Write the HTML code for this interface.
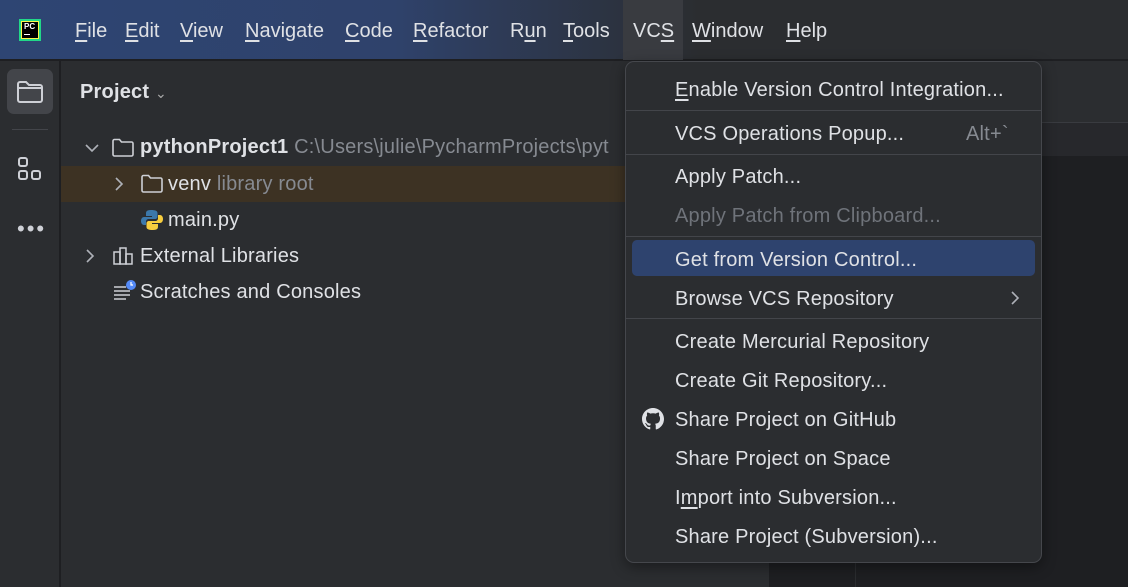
<!DOCTYPE html>
<html><head><meta charset="utf-8"><style>
*{margin:0;padding:0;box-sizing:border-box}
body{width:1128px;height:587px;overflow:hidden;background:#1e1f22;font-family:"Liberation Sans",sans-serif;color:#dfe1e5;position:relative}
.top{position:absolute;left:0;top:0;width:1128px;height:60px;background:linear-gradient(90deg,#2e4573 0%,#2f426b 35%,#2b2d30 62%,#2b2d30 100%);border-bottom:1px solid #1e1f22}
.mi{position:absolute;top:20px;font-size:20px;color:#dfe1e5}
.u{text-decoration:underline;text-underline-offset:3px}
.left{position:absolute;left:0;top:61px;width:60px;height:526px;background:#2b2d30;border-right:1px solid #1e1f22}
.proj{position:absolute;left:61px;top:61px;width:709px;height:526px;background:#2b2d30;border-right:1px solid #1e1f22}
.t{position:absolute;font-size:20px;white-space:nowrap;letter-spacing:0.2px}
.menu{position:absolute;left:625px;top:61px;width:417px;height:502px;background:#2b2d30;border:1px solid #45474c;border-radius:9px;box-shadow:0 4px 14px rgba(0,0,0,.4)}
.menu .t{left:49px}
.sep{position:absolute;left:0;width:415px;height:1px;background:#43454a}
.hl{position:absolute;left:6px;top:178px;width:403px;height:36px;background:#2e436e;border-radius:5px}
</style></head><body>
<div class="top">
 <div style="position:absolute;left:19px;top:19px;width:22px;height:22px;background:#21d789;padding:2px"><div style="width:18px;height:18px;background:#000;border:1px solid #fcf84a;color:#fff;font-size:8px;font-weight:bold;line-height:9px;padding-left:2px">PC<div style="width:6px;height:1px;background:#fff;margin-top:3px"></div></div></div>
 <div style="position:absolute;left:623px;top:0;width:60px;height:60px;background:#393b40"></div>
 <span class="mi" style="left:75px"><span class="u">F</span>ile</span>
 <span class="mi" style="left:125px"><span class="u">E</span>dit</span>
 <span class="mi" style="left:180px"><span class="u">V</span>iew</span>
 <span class="mi" style="left:245px"><span class="u">N</span>avigate</span>
 <span class="mi" style="left:345px"><span class="u">C</span>ode</span>
 <span class="mi" style="left:413px"><span class="u">R</span>efactor</span>
 <span class="mi" style="left:510px">R<span class="u">u</span>n</span>
 <span class="mi" style="left:563px"><span class="u">T</span>ools</span>
 <span class="mi" style="left:633px">VC<span class="u">S</span></span>
 <span class="mi" style="left:692px"><span class="u">W</span>indow</span>
 <span class="mi" style="left:786px"><span class="u">H</span>elp</span>
</div>
<div class="left">
 <div style="position:absolute;left:7px;top:8px;width:46px;height:45px;background:#43454a;border-radius:7px"></div>
 <svg style="position:absolute;left:16px;top:19px" width="28" height="24" viewBox="0 0 28 24"><path d="M2 4a2 2 0 0 1 2-2h6l3 3h11a2 2 0 0 1 2 2v13a2 2 0 0 1-2 2H4a2 2 0 0 1-2-2z M2 8h24" fill="none" stroke="#ced0d6" stroke-width="2"/></svg>
 <div style="position:absolute;left:12px;top:68px;width:36px;height:1px;background:#43454a"></div>
 <svg style="position:absolute;left:17px;top:95px" width="26" height="26" viewBox="0 0 26 26" fill="none" stroke="#ced0d6" stroke-width="2"><rect x="2" y="2" width="8" height="8" rx="2"/><rect x="2" y="15" width="8" height="8" rx="2"/><rect x="15" y="15" width="8" height="8" rx="2"/></svg>
 <div style="position:absolute;left:17px;top:164px;font-size:22px;letter-spacing:2px;color:#ced0d6;line-height:8px">•••</div>
</div>
<div class="proj">
 <span class="t" style="left:19px;top:20px;font-weight:bold;font-size:20px">Project <span style="font-weight:normal;font-size:14px;color:#aaa">&#8964;</span></span>
 <svg style="position:absolute;left:24px;top:82px" width="14" height="10"><path d="M1 2l6 6 6-6" fill="none" stroke="#aeb1b8" stroke-width="1.6"/></svg>
 <svg style="position:absolute;left:51px;top:77px" width="22" height="20"><path d="M1 3a1.5 1.5 0 0 1 1.5-1.5h5l2 2.5h10a1.5 1.5 0 0 1 1.5 1.5v11a1.5 1.5 0 0 1-1.5 1.5h-17A1.5 1.5 0 0 1 1 16.5z" fill="none" stroke="#ced0d6" stroke-width="1.6"/></svg>
 <span class="t" style="left:79px;top:75px;font-weight:bold">pythonProject1 <span style="font-weight:normal;color:#868a91">C:\Users\julie\PycharmProjects\pyt</span></span>
 <div style="position:absolute;left:0;top:105px;width:709px;height:36px;background:#3d3223"></div>
 <svg style="position:absolute;left:53px;top:116px" width="10" height="14"><path d="M2 1l6 6-6 6" fill="none" stroke="#aeb1b8" stroke-width="1.6"/></svg>
 <svg style="position:absolute;left:80px;top:113px" width="22" height="20"><path d="M1 3a1.5 1.5 0 0 1 1.5-1.5h5l2 2.5h10a1.5 1.5 0 0 1 1.5 1.5v11a1.5 1.5 0 0 1-1.5 1.5h-17A1.5 1.5 0 0 1 1 16.5z" fill="none" stroke="#ced0d6" stroke-width="1.6"/></svg>
 <span class="t" style="left:107px;top:112px">venv <span style="color:#868a91">library root</span></span>
 <svg style="position:absolute;left:80px;top:148px" width="22" height="22" viewBox="0 0 22 22"><path d="M10 1c-5 0-5 2-5 4v2h6v1H3c-2 0-3 2-3 4s1 4 3 4h2v-3c0-2 1-3 3-3h6c1.5 0 2.5-1 2.5-2.5V4c0-2-2-3-6.5-3z" fill="#3c78aa"/><path d="M12 21c5 0 5-2 5-4v-2h-6v-1h8c2 0 3-2 3-4s-1-4-3-4h-2v3c0 2-1 3-3 3H8c-1.5 0-2.5 1-2.5 2.5V18c0 2 2 3 6.5 3z" fill="#f7cd3e"/></svg>
 <span class="t" style="left:107px;top:148px">main.py</span>
 <svg style="position:absolute;left:24px;top:188px" width="10" height="14"><path d="M2 1l6 6-6 6" fill="none" stroke="#aeb1b8" stroke-width="1.6"/></svg>
 <svg style="position:absolute;left:52px;top:185px" width="22" height="20" fill="none" stroke="#ced0d6" stroke-width="1.5"><rect x="1" y="6" width="6" height="12"/><rect x="7" y="2" width="6" height="16"/><rect x="13" y="8" width="6" height="10"/></svg>
 <span class="t" style="left:79px;top:184px">External Libraries</span>
 <svg style="position:absolute;left:52px;top:218px" width="24" height="22"><g stroke="#ced0d6" stroke-width="1.6"><path d="M1 8h12M1 12h16M1 16h16M1 20h12"/></g><circle cx="18" cy="6" r="5" fill="#548af7"/><path d="M18 3v3h2" stroke="#fff" stroke-width="1.2" fill="none"/></svg>
 <span class="t" style="left:79px;top:220px">Scratches and Consoles</span>
</div>
<div style="position:absolute;left:855px;top:122px;width:273px;height:1px;background:#393b40"></div>
<div style="position:absolute;left:771px;top:61px;width:357px;height:61px;background:#2b2d30"></div>
<div style="position:absolute;left:855px;top:123px;width:273px;height:33px;background:#27282c"></div>
<div style="position:absolute;left:855px;top:122px;width:1px;height:465px;background:#2b2d30"></div>
<div class="menu">
 <div class="hl"></div>
 <span class="t" style="top:17px"><span class="u">E</span>nable Version Control Integration...</span>
 <div class="sep" style="top:48px"></div>
 <span class="t" style="top:61px">VCS Operations Popup...</span>
 <span class="t" style="top:61px;left:340px;color:#868a91">Alt+`</span>
 <div class="sep" style="top:92px"></div>
 <span class="t" style="top:104px">Apply Patch...</span>
 <span class="t" style="top:143px;color:#6f737a">Apply Patch from Clipboard...</span>
 <div class="sep" style="top:174px"></div>
 <span class="t" style="top:187px">Get from Version Control...</span>
 <span class="t" style="top:226px">Browse VCS Repository</span>
 <svg style="position:absolute;left:384px;top:229px" width="10" height="14"><path d="M2 1l6 6-6 6" fill="none" stroke="#aeb1b8" stroke-width="1.6"/></svg>
 <div class="sep" style="top:256px"></div>
 <span class="t" style="top:269px">Create Mercurial Repository</span>
 <span class="t" style="top:308px">Create Git Repository...</span>
 <svg style="position:absolute;left:16px;top:346px" width="22" height="22" viewBox="0 0 16 16"><path fill="#dfe1e5" d="M8 0C3.58 0 0 3.580 0 8c0 3.54 2.29 6.53 5.47 7.59.4.07.55-.17.55-.38 0-.19-.01-.82-.01-1.490-2.010.37-2.53-.49-2.69-.94-.09-.23-.48-.94-.82-1.130-.28-.15-.68-.52-.01-.53.63-.01 1.080.58 1.230.82.72 1.210 1.870.87 2.330.66.07-.52.28-.87.51-1.070-1.780-.2-3.640-.89-3.640-3.950 0-.87.31-1.590.82-2.150-.08-.2-.36-1.020.08-2.120 0 0 .67-.21 2.200.82.64-.18 1.320-.27 2-.27.68 0 1.360.09 2 .27 1.530-1.040 2.200-.82 2.200-.82.44 1.100.16 1.920.08 2.120.51.56.82 1.270.82 2.150 0 3.070-1.870 3.750-3.650 3.950.29.25.54.73.54 1.480 0 1.070-.01 1.930-.01 2.200 0 .21.15.46.55.38A8.013 8.013 0 0016 8c0-4.420-3.580-8-8-8z"/></svg>
 <span class="t" style="top:347px">Share Project on GitHub</span>
 <span class="t" style="top:386px">Share Project on Space</span>
 <span class="t" style="top:425px">I<span class="u">m</span>port into Subversion...</span>
 <span class="t" style="top:464px">Share Project (Subversion)...</span>
</div>
</body></html>
